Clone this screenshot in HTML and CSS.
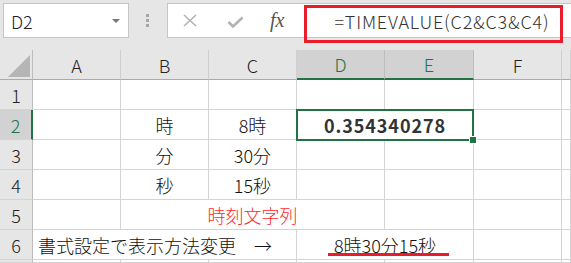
FILE: index.html
```html
<!DOCTYPE html>
<html lang="ja">
<head>
    <meta charset="UTF-8">
    <meta name="viewport" content="width=device-width, initial-scale=1.0">
    <title>TIMEVALUE</title>
    <link rel="stylesheet" href="styles.css">
</head>
<body>
    <div class="toolbar">
        <div class="namebox"><span>D2</span><span class="caret"></span></div>
        <div class="grip"><i></i><i></i><i></i></div>
        <div class="fbar">
            <svg class="icon-x" width="16" height="13" viewBox="0 0 16 13">
                <path d="M2 1 L14 12 M14 1 L2 12" stroke="#b3b3b3" stroke-width="1.6" fill="none"/>
            </svg>
            <svg class="icon-ok" width="17" height="12" viewBox="0 0 17 12">
                <path d="M1.5 6 L6 10.5 L15.5 1.5" stroke="#b3b3b3" stroke-width="2.6" fill="none"/>
            </svg>
            <span class="fx">fx</span>
            <div class="formula">=TIMEVALUE(C2&amp;C3&amp;C4)</div>
            <div class="mark"></div>
        </div>
    </div>

    <div class="sheet">
        <!-- column headers -->
        <div class="corner"></div>
        <div class="hd">A</div>
        <div class="hd">B</div>
        <div class="hd">C</div>
        <div class="hd sel">D</div>
        <div class="hd sel">E</div>
        <div class="hd">F</div>
        <div class="hd"></div>

        <!-- row 1 -->
        <div class="rh">1</div>
        <div class="c"></div><div class="c"></div><div class="c"></div><div class="c"></div>
        <div class="c"></div><div class="c"></div><div class="c"></div>

        <!-- row 2 -->
        <div class="rh sel">2</div>
        <div class="c"></div>
        <div class="c">時</div>
        <div class="c">8時</div>
        <div class="c pick">0.354340278<span class="handle"></span></div>
        <div class="c"></div>
        <div class="c"></div>

        <!-- row 3 -->
        <div class="rh">3</div>
        <div class="c"></div>
        <div class="c">分</div>
        <div class="c">30分</div>
        <div class="c"></div><div class="c"></div><div class="c"></div><div class="c"></div>

        <!-- row 4 -->
        <div class="rh">4</div>
        <div class="c"></div>
        <div class="c">秒</div>
        <div class="c">15秒</div>
        <div class="c"></div><div class="c"></div><div class="c"></div><div class="c"></div>

        <!-- row 5 -->
        <div class="rh">5</div>
        <div class="c"></div>
        <div class="c span3 red">時刻文字列</div>
        <div class="c"></div><div class="c"></div><div class="c"></div>

        <!-- row 6 -->
        <div class="rh">6</div>
        <div class="c span3 left">書式設定で表示方法変更　→</div>
        <div class="c span2 result">8時30分15秒<span class="underline"></span></div>
        <div class="c"></div><div class="c"></div>

        <!-- row 7 -->
        <div class="rh"></div>
        <div class="c"></div><div class="c"></div><div class="c"></div><div class="c"></div>
        <div class="c"></div><div class="c"></div><div class="c"></div>
    </div>
</body>
</html>
```

FILE: styles.css
```css
* {
    box-sizing: border-box;
}

body {
    margin: 0;
    width: 571px;
    height: 263px;
    overflow: hidden;
    background-color: #fff;
    font-family: "Noto Sans CJK JP", "Noto Sans", sans-serif;
    font-weight: 300;
    color: #222;
}

.toolbar {
    display: flex;
    align-items: flex-start;
    height: 50px;
    padding: 3px 0 0 3px;
    background-color: #e6e6e6;
}

.namebox {
    width: 126px;
    height: 35px;
    display: flex;
    align-items: center;
    justify-content: space-between;
    padding: 0 8px 0 7px;
    background-color: #fff;
    border: 1px solid #c6c6c6;
    font-size: 18px;
}

.caret {
    border-left: 4px solid transparent;
    border-right: 4px solid transparent;
    border-top: 4px solid #777;
}

.grip {
    display: flex;
    flex-direction: column;
    gap: 2px;
    margin: 11px 18px 0 17px;
}

.grip i {
    width: 3px;
    height: 3px;
    background-color: #a6a6a6;
}

.fbar {
    position: relative;
    flex: 1;
    height: 35px;
    display: flex;
    align-items: center;
    background-color: #fff;
    border: 1px solid #c6c6c6;
    border-right: none;
}

.icon-x {
    margin-left: 14px;
}

.icon-ok {
    margin-left: 29px;
    margin-top: 2px;
}

.fx {
    margin-left: 26px;
    font-family: "Liberation Serif", serif;
    font-style: italic;
    font-weight: normal;
    font-size: 20px;
    color: #555;
}

.formula {
    margin-left: 50px;
    font-size: 18px;
    letter-spacing: 0.8px;
    color: #333;
}

.mark {
    position: absolute;
    left: 136px;
    top: 1px;
    width: 259px;
    height: 38px;
    border: 3px solid #e81c2a;
}

.sheet {
    display: grid;
    grid-template-columns: 33px 88px 88px 88px 88px 89px 88px 9px;
    grid-template-rows: repeat(7, 30px) 3px;
    font-size: 18px;
}

.corner,
.hd,
.rh {
    display: flex;
    align-items: center;
    justify-content: center;
    background-color: #e6e6e6;
    color: #222;
}

.corner {
    position: relative;
    border-right: 1px solid #bdbdbd;
    border-bottom: 1px solid #ababab;
}

.corner::after {
    content: "";
    position: absolute;
    left: 8px;
    top: 5px;
    width: 22px;
    height: 22px;
    background-color: #b5b5b5;
    clip-path: polygon(100% 0, 100% 100%, 0 100%);
}

.hd {
    border-right: 1px solid #cfcfcf;
    border-bottom: 1px solid #ababab;
}

.hd.sel {
    background-color: #d2d2d2;
    color: #217346;
    border-bottom: 2px solid #217346;
    border-right-color: #bdbdbd;
}

.rh {
    border-right: 1px solid #bdbdbd;
    border-bottom: 1px solid #d4d4d4;
}

.rh.sel {
    background-color: #d2d2d2;
    color: #217346;
    border-right: 2px solid #217346;
}

.c {
    display: flex;
    align-items: center;
    justify-content: center;
    border-right: 1px solid #d4d4d4;
    border-bottom: 1px solid #d4d4d4;
    color: #111;
    white-space: nowrap;
}

.span2 {
    grid-column: span 2;
}

.span3 {
    grid-column: span 3;
}

.pick {
    position: relative;
    grid-column: span 2;
    margin: -1px 0 -1px -1px;
    border: 2px solid #217346;
    font-weight: bold;
    letter-spacing: 0.9px;
    color: #333;
}

.handle {
    position: absolute;
    right: -5px;
    bottom: -5px;
    width: 6px;
    height: 6px;
    background-color: #217346;
    border: 1px solid #fff;
    box-sizing: content-box;
}

.red {
    color: #ff1f2d;
}

.left {
    justify-content: flex-start;
    padding-left: 5px;
}

.result {
    position: relative;
}

.underline {
    position: absolute;
    left: 31px;
    top: 23px;
    width: 121px;
    height: 3px;
    background-color: #e81c2a;
}
```
